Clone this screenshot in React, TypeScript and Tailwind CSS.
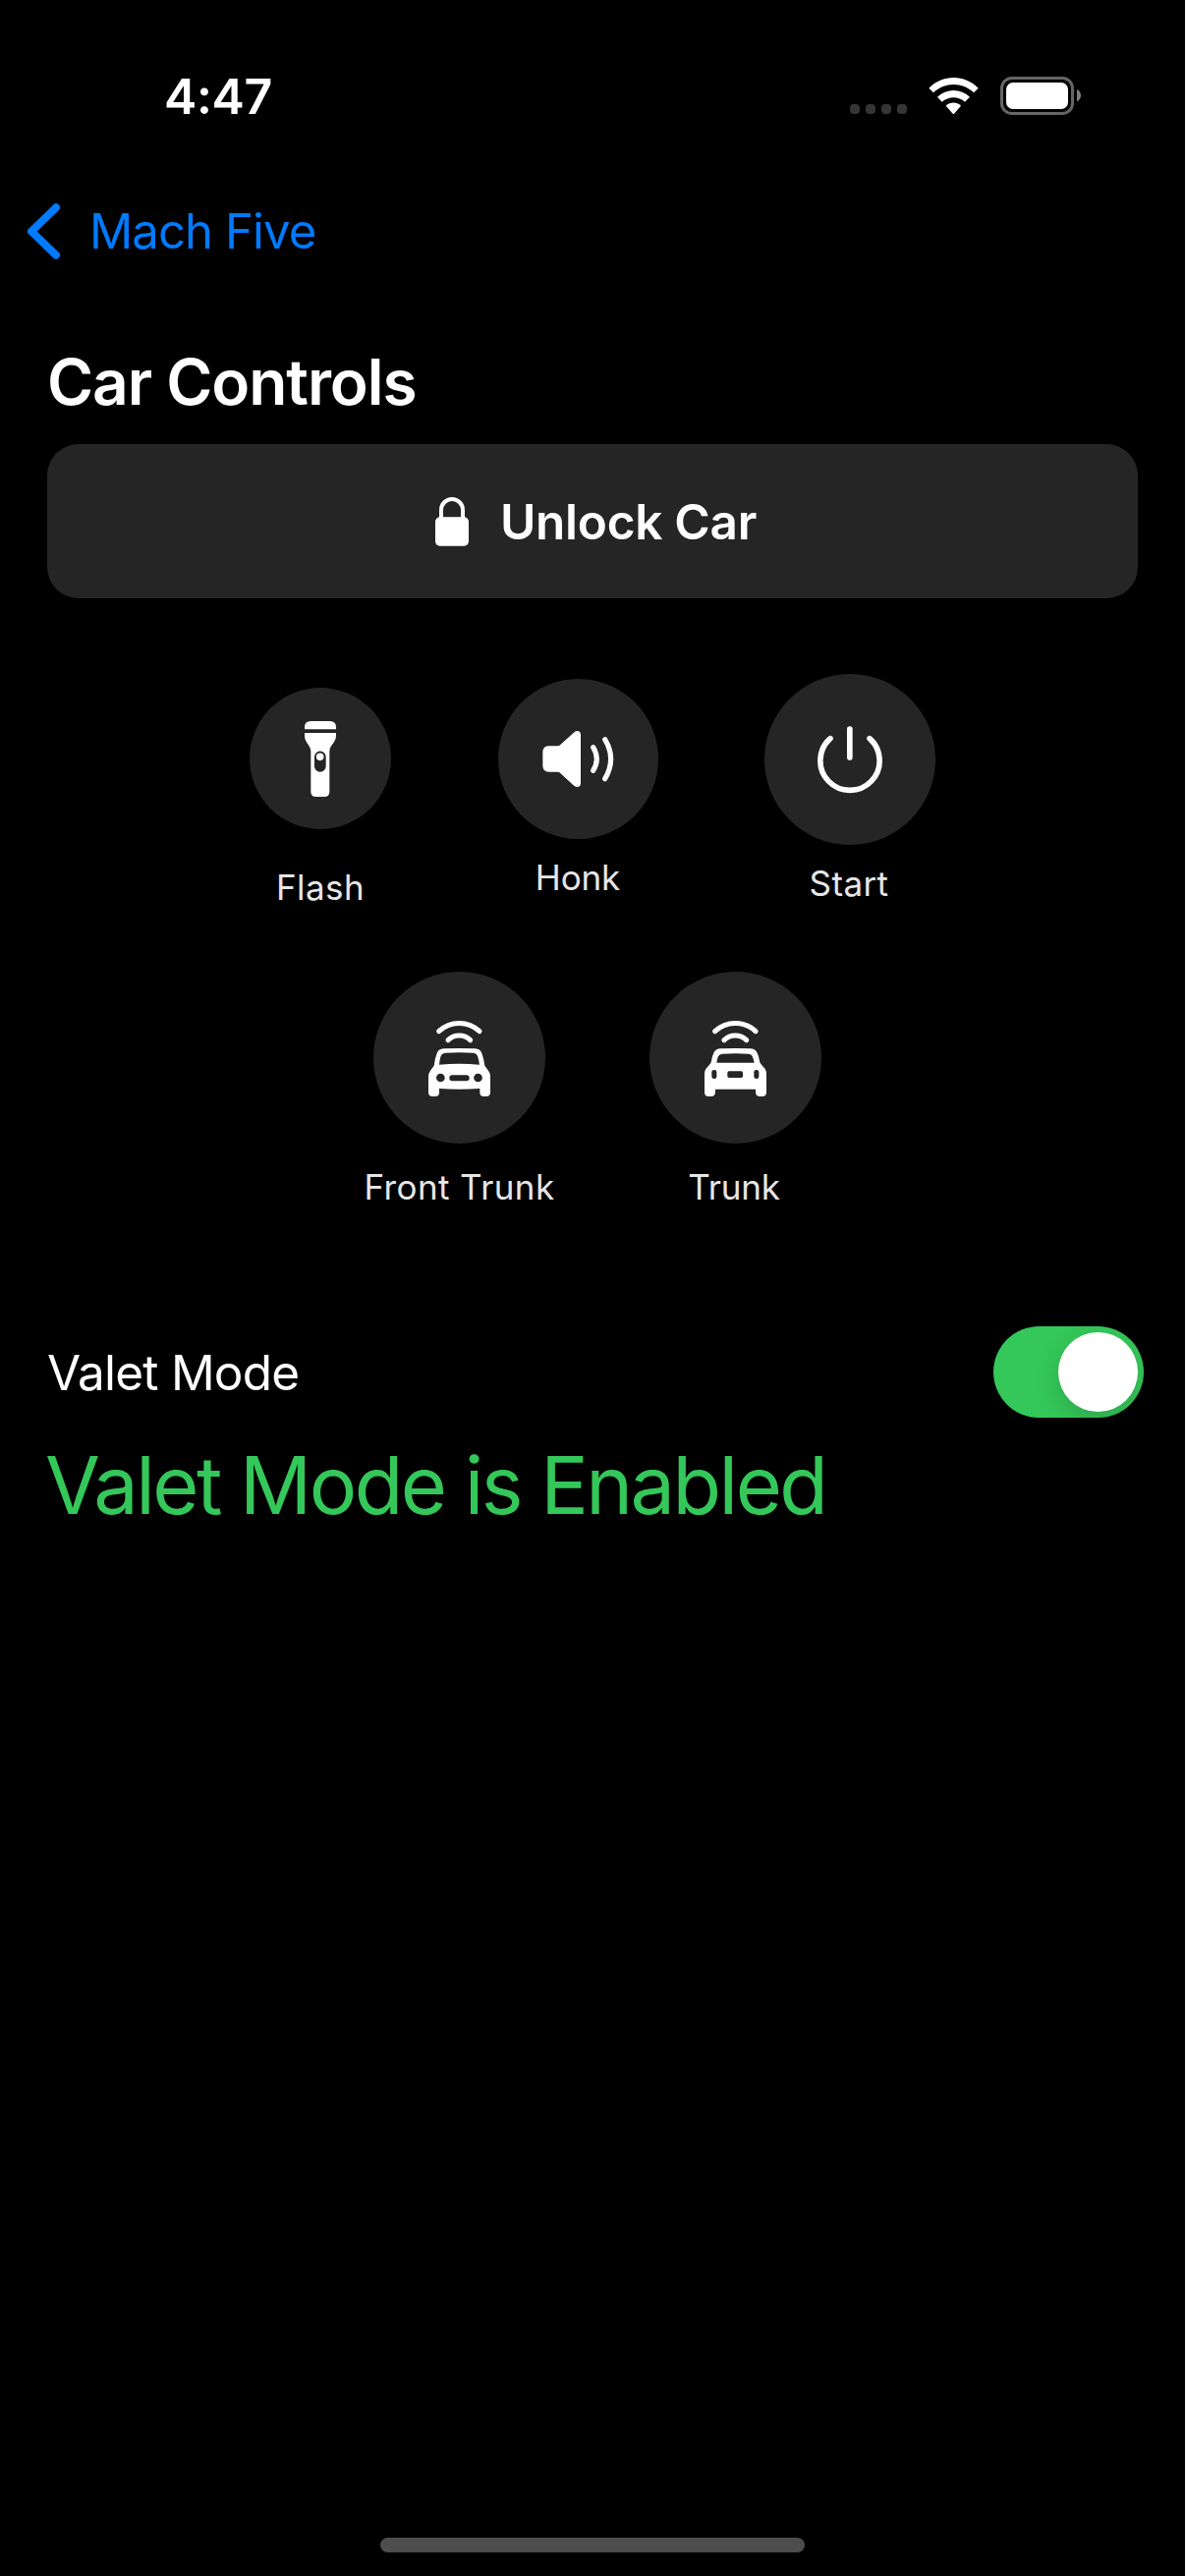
import type { ReactNode } from "react";

function StatusBar() {
  return (
    <header className="flex h-[196px] items-start justify-between pl-[167px] pr-[106px]">
      <span className="pt-[68px] text-[50px] leading-[60px] font-semibold tracking-[-0.38px] text-white">
        4:47
      </span>
      <div className="flex items-start pt-[78px]">
        <div className="flex gap-[6px] pt-[28px]">
          {[0, 1, 2, 3].map((dot) => (
            <span key={dot} className="size-[10px] rounded-[4px] bg-[#353535]" />
          ))}
        </div>
        <svg className="ml-[22px] h-[39px] w-[51px]" viewBox="315 84 153 117" fill="#fff">
          <path d="M316 119C358 76 425 76 467 119L453 133C418 100 365 100 330 133Z" />
          <path d="M342 146C370 119 413 119 441 146L426 161C407 143 376 143 356 161Z" />
          <path d="M368 173C381 160 401 160 414 173L393 197Q391 199 389 197Z" />
        </svg>
        <svg className="ml-[22px] h-[39px] w-[82px]" viewBox="534 84 246 117">
          <rect x="538.5" y="88.500" width="216" height="108" rx="31" fill="none" stroke="#666" strokeWidth="9" />
          <rect x="552" y="102" width="189" height="81" rx="21" fill="#fff" />
          <path d="M768 123C784 130 784 154 768 160Z" fill="#808080" />
        </svg>
      </div>
    </header>
  );
}

function NavBar() {
  return (
    <nav className="flex h-[78px] items-center pl-[27px] text-[#007aff]">
      <svg className="h-[57px] w-[34px]" viewBox="0 0 34 57" fill="none" stroke="currentColor" strokeWidth="8" strokeLinecap="round" strokeLinejoin="round">
        <path d="M30 4.300L5 28.500L30 52.700" />
      </svg>
      <span className="ml-[30px] pt-px text-[49px] leading-[78px] tracking-[-0.89px]">Mach Five</span>
    </nav>
  );
}

function FlashlightIcon() {
  return (
    <svg className="size-full" viewBox="42 60 432 432" fill="#fff">
      <path d="M210 187V181Q210 162 229 162H287Q306 162 306 181V187Z" />
      <path
        fillRule="evenodd"
        d="M210 198H306V207C306 229 286 234 286 256V377Q286 393 270 393H245Q229 393 229 377V256C229 234 210 229 210 207ZM240 271V300A17.500 17.500 0 0 0 275 300V271A17.500 17.500 0 0 0 240 271Z"
      />
      <circle cx="257" cy="271" r="11.500" />
    </svg>
  );
}

function SpeakerIcon() {
  return (
    <svg className="size-full" viewBox="50 33 489 489" fill="none">
      <path
        fill="#fff"
        d="M186 257Q186 238 205 238H233Q236 238 239 235L279 199Q286 192 291 192Q302 192 302 204V350Q302 363 291 363Q285 363 279 357L239 320Q236 317 232 317H205Q186 317 186 298Z"
      />
      <path
        d="M340 242Q362 277 340 313M376 218Q412 277 376 338"
        stroke="#fff"
        strokeWidth="15.500"
        strokeLinecap="round"
      />
    </svg>
  );
}

function PowerIcon() {
  return (
    <svg className="size-full" viewBox="54 18 522 522" fill="none" stroke="#fff" strokeWidth="17" strokeLinecap="round">
      <path d="M314.500 186V273" />
      <path d="M255 215A90.500 90.500 0 1 0 375 215" />
    </svg>
  );
}

function SignalWaves() {
  return (
    <path
      d="M260 209A90 90 0 0 1 384 209M288 236A49 49 0 0 1 356 236"
      fill="none"
      stroke="#fff"
      strokeWidth="15"
      strokeLinecap="round"
    />
  );
}

function CarFrontIcon() {
  return (
    <svg className="size-full" viewBox="60 27 525 525" fill="#fff">
      <SignalWaves />
      <path
        fillRule="evenodd"
        d="M274 262Q322 260 371 262Q386 263 391 276Q397 292 400 314L411 329Q417 337 417 348V395Q417 408 404 408H397Q385 408 385 396V384Q322 389 261 384V396Q261 408 249 408H241Q228 408 228 395V348Q228 337 234 329L245 314Q248 292 254 276Q259 263 274 262ZM279 275Q269 276 266 284Q262 296 261 311Q322 305 384 311Q382 296 378 284Q375 276 366 275Q322 272 279 275Z"
      />
      <g fill="#252525">
        <circle cx="265" cy="351" r="13" />
        <circle cx="379.500" cy="351" r="13" />
        <rect x="292" y="343" width="61" height="18" rx="9" />
      </g>
    </svg>
  );
}

function CarRearIcon() {
  return (
    <svg className="size-full" viewBox="60 27 525 525" fill="#fff">
      <SignalWaves />
      <path
        fillRule="evenodd"
        d="M277 262Q322 260 368 262Q382 263 388 273Q394 284 397 304Q400 311 407 317Q417 325 417 339V395Q417 408 404 408H397Q385 408 384 396V386H261V396Q260 408 248 408H241Q228 408 228 395V339Q228 325 238 317Q245 311 248 304Q251 284 257 273Q263 263 277 262ZM283 278Q273 279 270 286Q266 294 265 305H380Q378 294 374 286Q371 279 362 278Q322 275 283 278Z"
      />
      <g fill="#252525">
        <rect x="250" y="327" width="15" height="27" rx="7" />
        <rect x="379" y="327" width="15" height="27" rx="7" />
        <rect x="298" y="331" width="47" height="20" rx="5" />
      </g>
    </svg>
  );
}

function Control({
  label,
  className,
  circle,
  text,
  children,
}: {
  label: string;
  className: string;
  circle: string;
  text: string;
  children: ReactNode;
}) {
  return (
    <button className={`flex flex-col items-center ${className}`}>
      <span className={`shrink-0 rounded-full bg-[#252525] ${circle}`}>{children}</span>
      <span className={`text-[35px] leading-[44px] whitespace-nowrap text-[#e6e6e6] ${text}`}>{label}</span>
    </button>
  );
}

export default function App() {
  return (
    <div className="flex h-[2622px] w-[1206px] flex-col bg-black font-['Inter',sans-serif] text-white">
      <StatusBar />
      <NavBar />
      <main className="flex grow flex-col px-[48px]">
        <h1 className="mt-[74px] text-[64px] leading-[81px] font-semibold tracking-[-1.05px]">Car Controls</h1>
        <button className="mt-[23px] flex h-[157px] items-center justify-center rounded-[32px] bg-[#252525] pl-[7px]">
          <svg className="h-[50px] w-[34px]" viewBox="129 197 102 150">
            <path d="M147 262V236A33 33 0 0 1 213 236V262" fill="none" stroke="#fff" strokeWidth="12" />
            <rect x="129" y="258" width="102" height="88" rx="14" fill="#fff" />
          </svg>
          <span className="ml-[32px] text-[49.500px] leading-[60px] font-semibold tracking-[-0.28px]">Unlock Car</span>
        </button>

        <div className="mt-[77px] flex h-[239px] items-start justify-center gap-[108.500px]">
          <Control label="Flash" className="pt-[14px]" circle="size-[144px]" text="mt-[37px] tracking-[0.43px]">
            <FlashlightIcon />
          </Control>
          <Control label="Honk" className="pt-[5px]" circle="size-[163px]" text="mt-[17px] tracking-[-0.13px]">
            <SpeakerIcon />
          </Control>
          <Control label="Start" className="pt-0" circle="size-[174px]" text="mt-[17px] pr-[2px] tracking-[0.39px]">
            <PowerIcon />
          </Control>
        </div>

        <div className="mt-[64px] flex h-[241px] items-start justify-center gap-[96px]">
          <Control label="Front Trunk" className="w-[195px]" circle="size-[175px]" text="mt-[22px] tracking-[0.42px]">
            <CarFrontIcon />
          </Control>
          <Control label="Trunk" className="w-[175px]" circle="size-[175px]" text="mt-[22px] pr-[3px] tracking-[-0.2px]">
            <CarRearIcon />
          </Control>
        </div>

        <div className="mt-[120px] -mr-[6px] flex h-[93px] items-center justify-between">
          <span className="pt-px text-[49.500px] leading-[93px] tracking-[-0.75px]">Valet Mode</span>
          <button className="flex h-[93px] w-[153px] items-center justify-end overflow-hidden rounded-[46.500px] bg-[#34c759] pr-[6px]">
            <span className="size-[81px] rounded-full bg-white shadow-[0_9px_24px_rgba(0,0,0,0.15)]" />
          </button>
        </div>
        <p className="-ml-[2px] mt-[21px] text-[81px] leading-[96px] tracking-[-2.550px] whitespace-nowrap text-[#34c759]">
          Valet Mode is Enabled
        </p>
      </main>
      <div className="mx-auto mb-[24px] h-[15px] w-[432px] shrink-0 rounded-full bg-[#4d4d4d]" />
    </div>
  );
}
